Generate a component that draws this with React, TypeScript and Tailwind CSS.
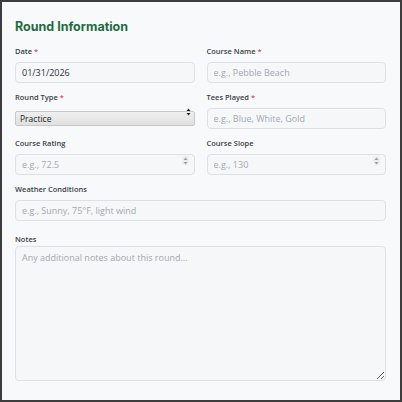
import React from 'react';

function Label({ text, required }: { text: string; required?: boolean }) {
  return (
    <label className="block text-[7.5px] leading-[9px] mb-[2px] font-semibold text-[#3a3f47]">
      {text}
      {required && <span className="text-[#e5484d]"> *</span>}
    </label>
  );
}

const inputCls =
  'w-full h-[21px] rounded-[4px] border border-[#dde1e6] bg-[#f6f7f9] px-[6px] text-[9px] text-[#2d3238] placeholder:text-[#a3a8b0] outline-none';

function Spinner({ dark }: { dark?: boolean }) {
  const c = dark ? '#222' : '#9aa0a6';
  return (
    <svg width="5" height="8" viewBox="0 0 5 8" className="pointer-events-none block">
      <path d="M2.5 0.5 L4.5 3 L0.5 3 Z" fill={c} />
      <path d="M2.5 7.5 L4.5 5 L0.5 5 Z" fill={c} />
    </svg>
  );
}

function NumberField({ placeholder }: { placeholder: string }) {
  return (
    <div className="relative">
      <input type="text" inputMode="decimal" className={inputCls} placeholder={placeholder} />
      <span className="absolute right-[6px] top-[6px] rounded-[2px] bg-[#eceef1] px-[1px] py-[0.5px]">
        <Spinner />
      </span>
    </div>
  );
}

export default function App() {
  return (
    <div
      className="w-[402px] h-[402px] border-2 border-[#3d3d3d] bg-[#f8f9fa] pl-[13px] pr-[14px] pt-[17px]"
      style={{ fontFamily: '"Open Sans", "Liberation Sans", sans-serif' }}
    >
      <h2
        className="text-[12.5px] leading-[15px] font-bold text-[#1f6b3f] mb-[13px]"
        style={{ fontFamily: 'Inter, "Noto Sans", sans-serif' }}
      >
        Round Information
      </h2>

      <div className="grid grid-cols-2 gap-x-3 gap-y-[10px]">
        <div>
          <Label text="Date" required />
          <input className={inputCls} defaultValue="01/31/2026" />
        </div>
        <div>
          <Label text="Course Name" required />
          <input className={inputCls} placeholder="e.g., Pebble Beach" />
        </div>
        <div>
          <Label text="Round Type" required />
          <div className="relative">
            <select
              className="w-full h-[15px] appearance-none rounded-[2px] border border-[#c8c8c8] bg-gradient-to-b from-[#efefef] to-[#e0e0e0] pl-[4px] text-[8.5px] leading-[13px] text-[#222]"
              defaultValue="Practice"
            >
              <option>Practice</option>
              <option>Tournament</option>
              <option>Casual</option>
            </select>
            <span className="absolute right-[4px] top-[3.5px]">
              <Spinner dark />
            </span>
          </div>
        </div>
        <div>
          <Label text="Tees Played" required />
          <input className={inputCls} placeholder="e.g., Blue, White, Gold" />
        </div>
        <div>
          <Label text="Course Rating" />
          <NumberField placeholder="e.g., 72.5" />
        </div>
        <div>
          <Label text="Course Slope" />
          <NumberField placeholder="e.g., 130" />
        </div>
        <div className="col-span-2">
          <Label text="Weather Conditions" />
          <input className={inputCls} placeholder="e.g., Sunny, 75°F, light wind" />
        </div>
        <div className="col-span-2 mt-[4px]">
          <Label text="Notes" />
          <textarea
            className="block w-full h-[135px] rounded-[4px] border border-[#dde1e6] bg-[#f6f7f9] px-[6px] py-[4px] text-[9px] text-[#2d3238] placeholder:text-[#a3a8b0] outline-none"
            placeholder="Any additional notes about this round..."
          />
        </div>
      </div>
    </div>
  );
}
